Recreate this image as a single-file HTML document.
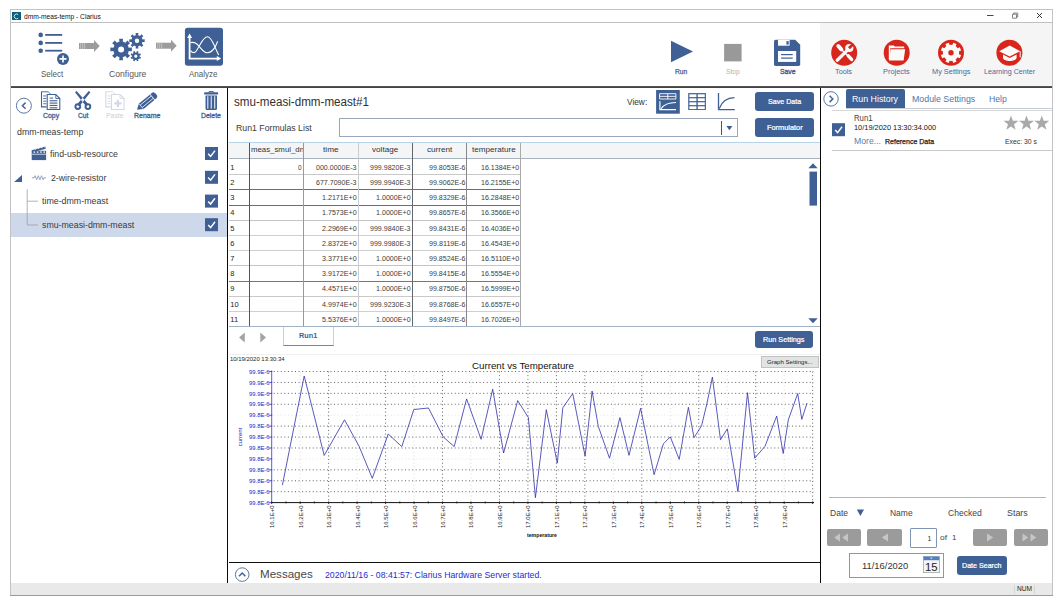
<!DOCTYPE html>
<html><head><meta charset="utf-8"><title>dmm-meas-temp - Clarius</title><style>
html,body{margin:0;padding:0;background:#fff;}
body{width:1063px;height:603px;position:relative;overflow:hidden;font-family:"Liberation Sans",sans-serif;}
div,svg,span{position:absolute;}
span{white-space:pre;transform-origin:0 50%;}
</style></head><body>
<div style="left:10px;top:9px;width:1043px;height:587px;background:#fff;box-sizing:border-box;border:1px solid #c2c2c2;"></div>
<div style="left:11px;top:22px;width:1041px;height:1px;background:#c0c0c0;"></div>
<div style="left:820.4px;top:23px;width:231.6px;height:63px;background:#f5f5f5;"></div>
<div style="left:11px;top:86px;width:1041px;height:2px;background:#4a4a4a;background:linear-gradient(#5e5e5e,#3c3c3c);"></div>
<div style="left:226.9px;top:88px;width:1.3px;height:495px;background:#0a0a0a;"></div>
<div style="left:819.8px;top:88px;width:1.3px;height:495px;background:#0a0a0a;"></div>
<div style="left:229px;top:562px;width:591px;height:1px;background:#111;"></div>
<div style="left:11px;top:583px;width:1041px;height:12px;background:#e9e9e9;"></div>
<div style="left:10px;top:595px;width:1043px;height:1px;background:#9a9a9a;"></div>
<div style="left:12px;top:11.5px;width:9px;height:8.7px;background:#0d5f7e;"></div>
<svg style="left:12px;top:11.5px;" width="9" height="9" viewBox="0 0 9 9"><path d="M6.2 2.6A2.4 2.4 0 1 0 6.2 6.2" fill="none" stroke="#cfe6ee" stroke-width="1"/></svg>
<span style="top:12.10px;height:9px;line-height:9px;font-size:7px;color:#111;left:23.80px;transform:scaleX(0.9492);">dmm-meas-temp - Clarius</span>
<svg style="left:983px;top:10px;" width="64" height="12" viewBox="0 0 64 12"><path d="M4 5.5h6.5" stroke="#333" stroke-width="0.9" fill="none"/><path d="M29.5 4.2h4v4h-4z M30.7 4.2v-1.2h4v4h-1.2" stroke="#555" stroke-width="0.7" fill="none"/><path d="M54 3l5 5M59 3l-5 5" stroke="#222" stroke-width="0.9" fill="none"/></svg>
<svg style="left:0px;top:0px;" width="240" height="88" viewBox="0 0 240 88"><circle cx="40.7" cy="34.9" r="2.3" fill="#3f6094"/><rect x="45.2" y="34.0" width="17" height="1.8" fill="#3f6094"/><circle cx="40.7" cy="42.9" r="2.3" fill="#3f6094"/><rect x="45.2" y="42.0" width="17" height="1.8" fill="#3f6094"/><circle cx="40.7" cy="50.7" r="2.3" fill="#3f6094"/><rect x="45.2" y="49.800000000000004" width="17" height="1.8" fill="#3f6094"/><circle cx="63" cy="58.9" r="6" fill="#3f6094"/><path d="M63 55.4v7M59.5 58.9h7" stroke="#fff" stroke-width="1.6"/></svg>
<span style="top:68.00px;height:12px;line-height:12px;font-size:9px;color:#585858;left:40.70px;transform:scaleX(0.8914);">Select</span>
<span style="top:68.00px;height:12px;line-height:12px;font-size:9px;color:#585858;left:109.00px;transform:scaleX(0.9582);">Configure</span>
<span style="top:68.00px;height:12px;line-height:12px;font-size:9px;color:#585858;left:189.30px;transform:scaleX(0.8929);">Analyze</span>
<svg style="left:0px;top:0px;" width="240" height="88" viewBox="0 0 240 88"><rect x="79" y="43" width="15.5" height="6" fill="#9c9c9c"/><rect x="80.3" y="43" width="0.8" height="6" fill="#c8c8c8"/><rect x="82.3" y="43" width="0.8" height="6" fill="#c8c8c8"/><rect x="84.3" y="43" width="0.8" height="6" fill="#c8c8c8"/><path d="M94 40L99.7 46L94 52Z" fill="#9c9c9c"/><rect x="156" y="42.7" width="15.5" height="6" fill="#9c9c9c"/><rect x="157.3" y="42.7" width="0.8" height="6" fill="#c8c8c8"/><rect x="159.3" y="42.7" width="0.8" height="6" fill="#c8c8c8"/><rect x="161.3" y="42.7" width="0.8" height="6" fill="#c8c8c8"/><path d="M171 39.7L176.7 45.7L171 51.7Z" fill="#9c9c9c"/></svg>
<span style="top:66.70px;height:9px;line-height:9px;font-size:7px;color:#3f6094;left:674.90px;transform:scaleX(0.9577);-webkit-text-stroke:0.25px #3f6094;">Run</span>
<span style="top:66.70px;height:9px;line-height:9px;font-size:7px;color:#b0b0b0;left:725.60px;transform:scaleX(0.9440);">Stop</span>
<span style="top:66.70px;height:9px;line-height:9px;font-size:7px;color:#3f6094;left:779.60px;transform:scaleX(0.9769);-webkit-text-stroke:0.35px #3f6094;">Save</span>
<svg style="left:660px;top:30px;" width="160" height="50" viewBox="0 0 160 50"><path d="M11 10.7L33 21.5L11 32.3Z" fill="#3f6094"/><rect x="64.1" y="13.9" width="17.5" height="17.5" fill="#999"/></svg>
<span style="top:66.50px;height:9px;line-height:9px;font-size:7px;color:#4a6a9c;left:835.00px;transform:scaleX(1.0402);">Tools</span>
<span style="top:66.50px;height:9px;line-height:9px;font-size:7px;color:#4a6a9c;left:882.70px;transform:scaleX(1.0594);">Projects</span>
<span style="top:66.50px;height:9px;line-height:9px;font-size:7px;color:#4a6a9c;left:931.70px;transform:scaleX(1.0525);">My Settings</span>
<span style="top:66.50px;height:9px;line-height:9px;font-size:7px;color:#4a6a9c;left:983.70px;transform:scaleX(1.0179);">Learning Center</span>
<svg style="left:820px;top:30px;" width="232" height="40" viewBox="0 0 232 40"><circle cx="24.200000000000045" cy="22.7" r="13" fill="#d8261c"/><circle cx="76.70000000000005" cy="22.7" r="13" fill="#d8261c"/><circle cx="131" cy="22.7" r="13" fill="#d8261c"/><circle cx="189.39999999999998" cy="22.7" r="13" fill="#d8261c"/></svg>
<span style="top:111.00px;height:9px;line-height:9px;font-size:7px;color:#3f6094;left:43.10px;transform:scaleX(0.9912);-webkit-text-stroke:0.3px #3f6094;">Copy</span>
<span style="top:111.00px;height:9px;line-height:9px;font-size:7px;color:#3f6094;left:77.90px;transform:scaleX(0.9536);-webkit-text-stroke:0.3px #3f6094;">Cut</span>
<span style="top:111.00px;height:9px;line-height:9px;font-size:7px;color:#c8cfda;left:106.30px;transform:scaleX(0.9829);">Paste</span>
<span style="top:111.00px;height:9px;line-height:9px;font-size:7px;color:#3f6094;left:133.80px;transform:scaleX(0.9936);-webkit-text-stroke:0.3px #3f6094;">Rename</span>
<span style="top:111.00px;height:9px;line-height:9px;font-size:7px;color:#3f6094;left:200.90px;transform:scaleX(0.9835);-webkit-text-stroke:0.3px #3f6094;">Delete</span>
<span style="top:126.40px;height:12px;line-height:12px;font-size:9px;color:#3a3a3a;left:16.60px;transform:scaleX(0.9748);">dmm-meas-temp</span>
<div style="left:11px;top:213px;width:216px;height:24px;background:#cdd8ea;"></div>
<span style="top:147.70px;height:12px;line-height:12px;font-size:9px;color:#3a3a3a;left:49.70px;transform:scaleX(0.9696);">find-usb-resource</span>
<span style="top:171.50px;height:12px;line-height:12px;font-size:9px;color:#3a3a3a;left:50.80px;transform:scaleX(0.9717);">2-wire-resistor</span>
<span style="top:195.30px;height:12px;line-height:12px;font-size:9px;color:#3a3a3a;left:41.50px;transform:scaleX(0.9805);">time-dmm-meast</span>
<span style="top:219.10px;height:12px;line-height:12px;font-size:9px;color:#3a3a3a;left:41.50px;transform:scaleX(0.9766);">smu-measi-dmm-meast</span>
<svg style="left:0px;top:0px;" width="230" height="250" viewBox="0 0 230 250"><rect x="205" y="147" width="13" height="13" fill="#3f6094"/><path d="M208.2 153.8L210.6 156.4L215.0 150.6" fill="none" stroke="#fff" stroke-width="1.5"/><rect x="205" y="170.8" width="13" height="13" fill="#3f6094"/><path d="M208.2 177.60000000000002L210.6 180.20000000000002L215.0 174.4" fill="none" stroke="#fff" stroke-width="1.5"/><rect x="205" y="194.6" width="13" height="13" fill="#3f6094"/><path d="M208.2 201.4L210.6 204.0L215.0 198.2" fill="none" stroke="#fff" stroke-width="1.5"/><rect x="205" y="218.2" width="13" height="13" fill="#3f6094"/><path d="M208.2 225.0L210.6 227.6L215.0 221.79999999999998" fill="none" stroke="#fff" stroke-width="1.5"/><path d="M27.2 189.2V225H38M27.2 201.2H38" fill="none" stroke="#a0a0a0" stroke-width="0.8"/><path d="M22 175V182H14.1Z" fill="#3f6094"/></svg>
<span style="top:94.20px;height:16px;line-height:16px;font-size:12.5px;color:#303030;left:234.00px;transform:scaleX(0.9299);">smu-measi-dmm-meast#1</span>
<span style="top:121.60px;height:12px;line-height:12px;font-size:9px;color:#3a3a3a;left:236.30px;transform:scaleX(0.9701);">Run1 Formulas List</span>
<span style="top:95.60px;height:12px;line-height:12px;font-size:9px;color:#333;left:627.00px;transform:scaleX(0.9241);">View:</span>
<div style="left:339.3px;top:118.2px;width:398.5px;height:19px;background:#fff;box-sizing:border-box;border:1px solid #9aa7ba;"></div>
<div style="left:721.3px;top:120.5px;width:0.8px;height:14.5px;background:#555;"></div>
<svg style="left:724px;top:124px;" width="12" height="8" viewBox="0 0 12 8"><path d="M2.4 2L8.4 2L5.4 6.2Z" fill="#3f6094"/></svg>
<div style="left:755.1px;top:92.2px;width:58.7px;height:18.6px;background:#3f6094;border-radius:3px;"></div>
<span style="top:97.20px;height:9px;line-height:9px;font-size:7px;color:#fff;left:767.85px;transform:scaleX(1.0157);-webkit-text-stroke:0.22px #fff;">Save Data</span>
<div style="left:755.1px;top:118.2px;width:58.7px;height:18.6px;background:#3f6094;border-radius:3px;"></div>
<span style="top:123.20px;height:9px;line-height:9px;font-size:7px;color:#fff;left:766.65px;transform:scaleX(1.0519);-webkit-text-stroke:0.22px #fff;">Formulator</span>
<div style="left:754.7px;top:330.8px;width:58.1px;height:17.2px;background:#3f6094;border-radius:3px;"></div>
<span style="top:335.10px;height:9px;line-height:9px;font-size:7px;color:#fff;left:763.00px;transform:scaleX(1.0351);-webkit-text-stroke:0.22px #fff;">Run Settings</span>
<div style="left:228.2px;top:142px;width:591.6px;height:16.3px;background:#f3f5f7;"></div>
<div style="left:229px;top:141.8px;width:591px;height:1px;background:#b9d3e6;"></div>
<div style="left:229px;top:158px;width:591px;height:1px;background:#a9b3bd;"></div>
<span style="top:145.40px;height:10px;line-height:10px;font-size:8px;color:#333;left:251.00px;transform:scaleX(0.9770);clip-path:inset(0 0.6px 0 0);">meas_smul_dn</span>
<span style="top:145.40px;height:10px;line-height:10px;font-size:8px;color:#333;left:323.35px;transform:scaleX(1.0314);">time</span>
<span style="top:145.40px;height:10px;line-height:10px;font-size:8px;color:#333;left:372.35px;transform:scaleX(1.0156);">voltage</span>
<span style="top:145.40px;height:10px;line-height:10px;font-size:8px;color:#333;left:426.95px;transform:scaleX(1.0198);">current</span>
<span style="top:145.40px;height:10px;line-height:10px;font-size:8px;color:#333;left:471.80px;transform:scaleX(1.0130);">temperature</span>
<div style="left:229px;top:174.0px;width:291.5px;height:1px;background:#c9c9c9;"></div>
<div style="left:229px;top:189.0px;width:291.5px;height:1px;background:#6e6e6e;"></div>
<div style="left:229px;top:204.5px;width:291.5px;height:1px;background:#6e6e6e;"></div>
<div style="left:229px;top:219.5px;width:291.5px;height:1px;background:#c4c4c4;"></div>
<div style="left:229px;top:235.0px;width:291.5px;height:1px;background:#cfcfcf;"></div>
<div style="left:229px;top:250.0px;width:291.5px;height:1px;background:#cfcfcf;"></div>
<div style="left:229px;top:265.0px;width:291.5px;height:1px;background:#c4c4c4;"></div>
<div style="left:229px;top:280.5px;width:291.5px;height:1px;background:#777;"></div>
<div style="left:229px;top:295.5px;width:291.5px;height:1px;background:#c9c9c9;"></div>
<div style="left:229px;top:310.5px;width:291.5px;height:1px;background:#cfcfcf;"></div>
<div style="left:249.1px;top:142.5px;width:1px;height:184px;background:#555;"></div>
<div style="left:303.4px;top:142.5px;width:1px;height:184px;background:#999;"></div>
<div style="left:357.9px;top:142.5px;width:1px;height:184px;background:#ccc;"></div>
<div style="left:412.0px;top:142.5px;width:1px;height:184px;background:#666;"></div>
<div style="left:466.3px;top:142.5px;width:1px;height:184px;background:#888;"></div>
<div style="left:520.0px;top:142.5px;width:1px;height:184px;background:#aaa;"></div>
<span style="top:162.79px;height:10px;line-height:10px;font-size:7.5px;color:#222;left:230.30px;">1</span>
<span style="top:162.79px;height:10px;line-height:10px;font-size:7.5px;color:#3c3c3c;left:298.10px;transform:scaleX(0.8629);">0</span>
<span style="top:162.79px;height:10px;line-height:10px;font-size:7.5px;color:#3c3c3c;left:315.80px;transform:scaleX(0.9406);">000.0000E-3</span>
<span style="top:162.79px;height:10px;line-height:10px;font-size:7.5px;color:#3c3c3c;left:370.40px;transform:scaleX(0.9406);">999.9820E-3</span>
<span style="top:162.79px;height:10px;line-height:10px;font-size:7.5px;color:#3c3c3c;left:429.10px;transform:scaleX(0.9408);">99.8053E-6</span>
<span style="top:162.79px;height:10px;line-height:10px;font-size:7.5px;color:#3c3c3c;left:481.20px;transform:scaleX(0.9417);">16.1384E+0</span>
<span style="top:177.98px;height:10px;line-height:10px;font-size:7.5px;color:#222;left:230.30px;">2</span>
<span style="top:177.98px;height:10px;line-height:10px;font-size:7.5px;color:#3c3c3c;left:315.80px;transform:scaleX(0.9406);">677.7090E-3</span>
<span style="top:177.98px;height:10px;line-height:10px;font-size:7.5px;color:#3c3c3c;left:370.40px;transform:scaleX(0.9406);">999.9940E-3</span>
<span style="top:177.98px;height:10px;line-height:10px;font-size:7.5px;color:#3c3c3c;left:429.10px;transform:scaleX(0.9408);">99.9062E-6</span>
<span style="top:177.98px;height:10px;line-height:10px;font-size:7.5px;color:#3c3c3c;left:481.20px;transform:scaleX(0.9417);">16.2155E+0</span>
<span style="top:193.17px;height:10px;line-height:10px;font-size:7.5px;color:#222;left:230.30px;">3</span>
<span style="top:193.17px;height:10px;line-height:10px;font-size:7.5px;color:#3c3c3c;left:321.60px;transform:scaleX(0.9479);">1.2171E+0</span>
<span style="top:193.17px;height:10px;line-height:10px;font-size:7.5px;color:#3c3c3c;left:376.20px;transform:scaleX(0.9479);">1.0000E+0</span>
<span style="top:193.17px;height:10px;line-height:10px;font-size:7.5px;color:#3c3c3c;left:429.10px;transform:scaleX(0.9408);">99.8329E-6</span>
<span style="top:193.17px;height:10px;line-height:10px;font-size:7.5px;color:#3c3c3c;left:481.20px;transform:scaleX(0.9417);">16.2848E+0</span>
<span style="top:208.36px;height:10px;line-height:10px;font-size:7.5px;color:#222;left:230.30px;">4</span>
<span style="top:208.36px;height:10px;line-height:10px;font-size:7.5px;color:#3c3c3c;left:321.60px;transform:scaleX(0.9479);">1.7573E+0</span>
<span style="top:208.36px;height:10px;line-height:10px;font-size:7.5px;color:#3c3c3c;left:376.20px;transform:scaleX(0.9479);">1.0000E+0</span>
<span style="top:208.36px;height:10px;line-height:10px;font-size:7.5px;color:#3c3c3c;left:429.10px;transform:scaleX(0.9408);">99.8657E-6</span>
<span style="top:208.36px;height:10px;line-height:10px;font-size:7.5px;color:#3c3c3c;left:481.20px;transform:scaleX(0.9417);">16.3566E+0</span>
<span style="top:223.55px;height:10px;line-height:10px;font-size:7.5px;color:#222;left:230.30px;">5</span>
<span style="top:223.55px;height:10px;line-height:10px;font-size:7.5px;color:#3c3c3c;left:321.60px;transform:scaleX(0.9479);">2.2969E+0</span>
<span style="top:223.55px;height:10px;line-height:10px;font-size:7.5px;color:#3c3c3c;left:370.40px;transform:scaleX(0.9406);">999.9840E-3</span>
<span style="top:223.55px;height:10px;line-height:10px;font-size:7.5px;color:#3c3c3c;left:429.10px;transform:scaleX(0.9408);">99.8431E-6</span>
<span style="top:223.55px;height:10px;line-height:10px;font-size:7.5px;color:#3c3c3c;left:481.20px;transform:scaleX(0.9417);">16.4036E+0</span>
<span style="top:238.74px;height:10px;line-height:10px;font-size:7.5px;color:#222;left:230.30px;">6</span>
<span style="top:238.74px;height:10px;line-height:10px;font-size:7.5px;color:#3c3c3c;left:321.60px;transform:scaleX(0.9479);">2.8372E+0</span>
<span style="top:238.74px;height:10px;line-height:10px;font-size:7.5px;color:#3c3c3c;left:370.40px;transform:scaleX(0.9406);">999.9980E-3</span>
<span style="top:238.74px;height:10px;line-height:10px;font-size:7.5px;color:#3c3c3c;left:429.10px;transform:scaleX(0.9546);">99.8119E-6</span>
<span style="top:238.74px;height:10px;line-height:10px;font-size:7.5px;color:#3c3c3c;left:481.20px;transform:scaleX(0.9417);">16.4543E+0</span>
<span style="top:253.94px;height:10px;line-height:10px;font-size:7.5px;color:#222;left:230.30px;">7</span>
<span style="top:253.94px;height:10px;line-height:10px;font-size:7.5px;color:#3c3c3c;left:321.60px;transform:scaleX(0.9479);">3.3771E+0</span>
<span style="top:253.94px;height:10px;line-height:10px;font-size:7.5px;color:#3c3c3c;left:376.20px;transform:scaleX(0.9479);">1.0000E+0</span>
<span style="top:253.94px;height:10px;line-height:10px;font-size:7.5px;color:#3c3c3c;left:429.10px;transform:scaleX(0.9408);">99.8524E-6</span>
<span style="top:253.94px;height:10px;line-height:10px;font-size:7.5px;color:#3c3c3c;left:481.20px;transform:scaleX(0.9549);">16.5110E+0</span>
<span style="top:269.12px;height:10px;line-height:10px;font-size:7.5px;color:#222;left:230.30px;">8</span>
<span style="top:269.12px;height:10px;line-height:10px;font-size:7.5px;color:#3c3c3c;left:321.60px;transform:scaleX(0.9479);">3.9172E+0</span>
<span style="top:269.12px;height:10px;line-height:10px;font-size:7.5px;color:#3c3c3c;left:376.20px;transform:scaleX(0.9479);">1.0000E+0</span>
<span style="top:269.12px;height:10px;line-height:10px;font-size:7.5px;color:#3c3c3c;left:429.10px;transform:scaleX(0.9408);">99.8415E-6</span>
<span style="top:269.12px;height:10px;line-height:10px;font-size:7.5px;color:#3c3c3c;left:481.20px;transform:scaleX(0.9417);">16.5554E+0</span>
<span style="top:284.31px;height:10px;line-height:10px;font-size:7.5px;color:#222;left:230.30px;">9</span>
<span style="top:284.31px;height:10px;line-height:10px;font-size:7.5px;color:#3c3c3c;left:321.60px;transform:scaleX(0.9479);">4.4571E+0</span>
<span style="top:284.31px;height:10px;line-height:10px;font-size:7.5px;color:#3c3c3c;left:376.20px;transform:scaleX(0.9479);">1.0000E+0</span>
<span style="top:284.31px;height:10px;line-height:10px;font-size:7.5px;color:#3c3c3c;left:429.10px;transform:scaleX(0.9408);">99.8750E-6</span>
<span style="top:284.31px;height:10px;line-height:10px;font-size:7.5px;color:#3c3c3c;left:481.20px;transform:scaleX(0.9417);">16.5999E+0</span>
<span style="top:299.51px;height:10px;line-height:10px;font-size:7.5px;color:#222;left:230.30px;">10</span>
<span style="top:299.51px;height:10px;line-height:10px;font-size:7.5px;color:#3c3c3c;left:321.60px;transform:scaleX(0.9479);">4.9974E+0</span>
<span style="top:299.51px;height:10px;line-height:10px;font-size:7.5px;color:#3c3c3c;left:370.40px;transform:scaleX(0.9406);">999.9230E-3</span>
<span style="top:299.51px;height:10px;line-height:10px;font-size:7.5px;color:#3c3c3c;left:429.10px;transform:scaleX(0.9408);">99.8768E-6</span>
<span style="top:299.51px;height:10px;line-height:10px;font-size:7.5px;color:#3c3c3c;left:481.20px;transform:scaleX(0.9417);">16.6557E+0</span>
<span style="top:314.69px;height:10px;line-height:10px;font-size:7.5px;color:#222;left:230.30px;">11</span>
<span style="top:314.69px;height:10px;line-height:10px;font-size:7.5px;color:#3c3c3c;left:321.60px;transform:scaleX(0.9479);">5.5376E+0</span>
<span style="top:314.69px;height:10px;line-height:10px;font-size:7.5px;color:#3c3c3c;left:376.20px;transform:scaleX(0.9479);">1.0000E+0</span>
<span style="top:314.69px;height:10px;line-height:10px;font-size:7.5px;color:#3c3c3c;left:429.10px;transform:scaleX(0.9408);">99.8497E-6</span>
<span style="top:314.69px;height:10px;line-height:10px;font-size:7.5px;color:#3c3c3c;left:481.20px;transform:scaleX(0.9417);">16.7026E+0</span>
<svg style="left:806px;top:160px;" width="14" height="168" viewBox="0 0 14 168"><path d="M2.3 8.3L11.7 8.3L7 3.2Z" fill="#3f6094"/><rect x="3.5" y="11.6" width="7.5" height="34" fill="#3f6094"/><path d="M2.3 158.2L11.7 158.2L7 163.2Z" fill="#3f6094"/></svg>
<div style="left:229px;top:326px;width:591px;height:1px;background:#9fb2c6;"></div>
<div style="left:283.4px;top:326.5px;width:50.3px;height:19.5px;background:#fff;box-sizing:border-box;border:1px solid #c8d0da;border-top:none;border-bottom:1.5px solid #6f87a8;"></div>
<span style="top:330.60px;height:10px;line-height:10px;font-size:8px;color:#3f6094;font-weight:700;left:299.20px;transform:scaleX(0.9100);">Run1</span>
<svg style="left:236px;top:330px;" width="34" height="15" viewBox="0 0 34 15"><path d="M8.8 2.5V12.5L3 7.5Z M24.3 2.5V12.5L30 7.5Z" fill="#a3a3a3"/></svg>
<div style="left:229px;top:353.5px;width:591px;height:1px;background:#f0f0f0;"></div>
<span style="top:354.80px;height:8px;line-height:8px;font-size:5.8px;color:#222;left:229.80px;transform:scaleX(1.0244);">10/19/2020 13:30:34</span>
<span style="top:359.80px;height:12px;line-height:12px;font-size:9.4px;color:#111;left:472.00px;transform:scaleX(1.0375);">Current vs Temperature</span>
<div style="left:761.4px;top:356px;width:57.2px;height:11.5px;background:#e3e3e3;box-sizing:border-box;border:1px solid #c2c2c2;"></div>
<span style="top:357.90px;height:8px;line-height:8px;font-size:6px;color:#222;left:767.45px;transform:scaleX(1.0104);">Graph Settings...</span>
<svg style="left:0px;top:0px;" width="830" height="560" viewBox="0 0 830 560"><path d="M273.7 371.50H813.5" stroke="#3a3a3a" stroke-width="0.8" stroke-dasharray="1 2.55" fill="none"/><path d="M273.7 382.43H813.5" stroke="#3a3a3a" stroke-width="0.8" stroke-dasharray="1 2.55" fill="none"/><path d="M273.7 393.35H813.5" stroke="#3a3a3a" stroke-width="0.8" stroke-dasharray="1 2.55" fill="none"/><path d="M273.7 404.27H813.5" stroke="#3a3a3a" stroke-width="0.8" stroke-dasharray="1 2.55" fill="none"/><path d="M273.7 415.20H813.5" stroke="#dcdcdc" stroke-width="0.8" stroke-dasharray="1 2.55" fill="none"/><path d="M273.7 426.12H813.5" stroke="#3a3a3a" stroke-width="0.8" stroke-dasharray="1 2.55" fill="none"/><path d="M273.7 437.05H813.5" stroke="#3a3a3a" stroke-width="0.8" stroke-dasharray="1 2.55" fill="none"/><path d="M273.7 447.98H813.5" stroke="#3a3a3a" stroke-width="0.8" stroke-dasharray="1 2.55" fill="none"/><path d="M273.7 458.90H813.5" stroke="#dcdcdc" stroke-width="0.8" stroke-dasharray="1 2.55" fill="none"/><path d="M273.7 469.83H813.5" stroke="#3a3a3a" stroke-width="0.8" stroke-dasharray="1 2.55" fill="none"/><path d="M273.7 480.75H813.5" stroke="#3a3a3a" stroke-width="0.8" stroke-dasharray="1 2.55" fill="none"/><path d="M273.7 491.68H813.5" stroke="#3a3a3a" stroke-width="0.8" stroke-dasharray="1 2.55" fill="none"/><path d="M300.17 371.5V502.6" stroke="#cfcfcf" stroke-width="0.8" stroke-dasharray="1 2.65" fill="none"/><path d="M328.64 371.5V502.6" stroke="#3a3a3a" stroke-width="0.8" stroke-dasharray="1 2.65" fill="none"/><path d="M357.11 371.5V502.6" stroke="#cfcfcf" stroke-width="0.8" stroke-dasharray="1 2.65" fill="none"/><path d="M385.58 371.5V502.6" stroke="#3a3a3a" stroke-width="0.8" stroke-dasharray="1 2.65" fill="none"/><path d="M414.05 371.5V502.6" stroke="#cfcfcf" stroke-width="0.8" stroke-dasharray="1 2.65" fill="none"/><path d="M442.52 371.5V502.6" stroke="#3a3a3a" stroke-width="0.8" stroke-dasharray="1 2.65" fill="none"/><path d="M470.99 371.5V502.6" stroke="#cfcfcf" stroke-width="0.8" stroke-dasharray="1 2.65" fill="none"/><path d="M499.46 371.5V502.6" stroke="#3a3a3a" stroke-width="0.8" stroke-dasharray="1 2.65" fill="none"/><path d="M527.93 371.5V502.6" stroke="#3a3a3a" stroke-width="0.8" stroke-dasharray="1 2.65" fill="none"/><path d="M556.40 371.5V502.6" stroke="#3a3a3a" stroke-width="0.8" stroke-dasharray="1 2.65" fill="none"/><path d="M584.87 371.5V502.6" stroke="#3a3a3a" stroke-width="0.8" stroke-dasharray="1 2.65" fill="none"/><path d="M613.34 371.5V502.6" stroke="#cfcfcf" stroke-width="0.8" stroke-dasharray="1 2.65" fill="none"/><path d="M641.81 371.5V502.6" stroke="#3a3a3a" stroke-width="0.8" stroke-dasharray="1 2.65" fill="none"/><path d="M670.28 371.5V502.6" stroke="#cfcfcf" stroke-width="0.8" stroke-dasharray="1 2.65" fill="none"/><path d="M698.75 371.5V502.6" stroke="#3a3a3a" stroke-width="0.8" stroke-dasharray="1 2.65" fill="none"/><path d="M727.22 371.5V502.6" stroke="#cfcfcf" stroke-width="0.8" stroke-dasharray="1 2.65" fill="none"/><path d="M755.69 371.5V502.6" stroke="#3a3a3a" stroke-width="0.8" stroke-dasharray="1 2.65" fill="none"/><path d="M784.16 371.5V502.6" stroke="#cfcfcf" stroke-width="0.8" stroke-dasharray="1 2.65" fill="none"/><path d="M812.63 371.5V502.6" stroke="#3a3a3a" stroke-width="0.8" stroke-dasharray="1 2.65" fill="none"/><path d="M271.7 370.5V502.6" stroke="#3030cc" stroke-width="0.8" fill="none"/><path d="M271.2 502.6H814.0" stroke="#111" stroke-width="1" fill="none"/><path d="M269.2 371.50h3" stroke="#2222cc" stroke-width="0.8"/><path d="M269.2 382.43h3" stroke="#2222cc" stroke-width="0.8"/><path d="M269.2 393.35h3" stroke="#2222cc" stroke-width="0.8"/><path d="M269.2 404.27h3" stroke="#2222cc" stroke-width="0.8"/><path d="M269.2 415.20h3" stroke="#2222cc" stroke-width="0.8"/><path d="M269.2 426.12h3" stroke="#2222cc" stroke-width="0.8"/><path d="M269.2 437.05h3" stroke="#2222cc" stroke-width="0.8"/><path d="M269.2 447.98h3" stroke="#2222cc" stroke-width="0.8"/><path d="M269.2 458.90h3" stroke="#2222cc" stroke-width="0.8"/><path d="M269.2 469.83h3" stroke="#2222cc" stroke-width="0.8"/><path d="M269.2 480.75h3" stroke="#2222cc" stroke-width="0.8"/><path d="M269.2 491.68h3" stroke="#2222cc" stroke-width="0.8"/><path d="M269.2 502.60h3" stroke="#2222cc" stroke-width="0.8"/><path d="M271.70 501.40000000000003v2.6" stroke="#111" stroke-width="0.8"/><path d="M285.94 501.40000000000003v2" stroke="#111" stroke-width="0.8"/><path d="M300.17 501.40000000000003v2.6" stroke="#111" stroke-width="0.8"/><path d="M314.40 501.40000000000003v2" stroke="#111" stroke-width="0.8"/><path d="M328.64 501.40000000000003v2.6" stroke="#111" stroke-width="0.8"/><path d="M342.88 501.40000000000003v2" stroke="#111" stroke-width="0.8"/><path d="M357.11 501.40000000000003v2.6" stroke="#111" stroke-width="0.8"/><path d="M371.34 501.40000000000003v2" stroke="#111" stroke-width="0.8"/><path d="M385.58 501.40000000000003v2.6" stroke="#111" stroke-width="0.8"/><path d="M399.81 501.40000000000003v2" stroke="#111" stroke-width="0.8"/><path d="M414.05 501.40000000000003v2.6" stroke="#111" stroke-width="0.8"/><path d="M428.28 501.40000000000003v2" stroke="#111" stroke-width="0.8"/><path d="M442.52 501.40000000000003v2.6" stroke="#111" stroke-width="0.8"/><path d="M456.75 501.40000000000003v2" stroke="#111" stroke-width="0.8"/><path d="M470.99 501.40000000000003v2.6" stroke="#111" stroke-width="0.8"/><path d="M485.22 501.40000000000003v2" stroke="#111" stroke-width="0.8"/><path d="M499.46 501.40000000000003v2.6" stroke="#111" stroke-width="0.8"/><path d="M513.69 501.40000000000003v2" stroke="#111" stroke-width="0.8"/><path d="M527.93 501.40000000000003v2.6" stroke="#111" stroke-width="0.8"/><path d="M542.16 501.40000000000003v2" stroke="#111" stroke-width="0.8"/><path d="M556.40 501.40000000000003v2.6" stroke="#111" stroke-width="0.8"/><path d="M570.63 501.40000000000003v2" stroke="#111" stroke-width="0.8"/><path d="M584.87 501.40000000000003v2.6" stroke="#111" stroke-width="0.8"/><path d="M599.11 501.40000000000003v2" stroke="#111" stroke-width="0.8"/><path d="M613.34 501.40000000000003v2.6" stroke="#111" stroke-width="0.8"/><path d="M627.58 501.40000000000003v2" stroke="#111" stroke-width="0.8"/><path d="M641.81 501.40000000000003v2.6" stroke="#111" stroke-width="0.8"/><path d="M656.04 501.40000000000003v2" stroke="#111" stroke-width="0.8"/><path d="M670.28 501.40000000000003v2.6" stroke="#111" stroke-width="0.8"/><path d="M684.51 501.40000000000003v2" stroke="#111" stroke-width="0.8"/><path d="M698.75 501.40000000000003v2.6" stroke="#111" stroke-width="0.8"/><path d="M712.98 501.40000000000003v2" stroke="#111" stroke-width="0.8"/><path d="M727.22 501.40000000000003v2.6" stroke="#111" stroke-width="0.8"/><path d="M741.45 501.40000000000003v2" stroke="#111" stroke-width="0.8"/><path d="M755.69 501.40000000000003v2.6" stroke="#111" stroke-width="0.8"/><path d="M769.92 501.40000000000003v2" stroke="#111" stroke-width="0.8"/><path d="M784.16 501.40000000000003v2.6" stroke="#111" stroke-width="0.8"/><path d="M798.39 501.40000000000003v2" stroke="#111" stroke-width="0.8"/><path d="M812.63 501.40000000000003v2.6" stroke="#111" stroke-width="0.8"/><path d="M282.4 485.1L304.2 376L324.2 455.4L344.5 419.8L359 446.1L372.3 478.3L388.2 434L401.8 446.6L413.8 409.5L428.5 408L443.2 436.9L454.2 446.6L466.6 398.9L481.1 439.3L492.7 389.2L503.6 453L517.7 400.6L528.4 417.6L535.4 497.7L546.3 409.7L557.3 463.1L562.8 407.8L572.7 393.6L585.1 456.1L592.1 391.1L598.3 426.4L609.5 458.2L619.9 417.6L629 455.4L640.6 408.3L654.1 474.7L663.4 443.8L670.3 436.8L679.2 459.4L688.4 407.3L694 437.7L701.6 425.7L707 403.2L712.4 377.1L720.5 439.8L727.3 428.8L737.9 491.6L747.5 392.7L754.7 458.2L765 446.3L776.7 416L783.2 453.5L788.3 419.9L797.7 393.5L801.8 419.4L807 403" stroke="#3030ac" stroke-width="0.8" fill="none" stroke-linejoin="miter"/></svg>
<span style="top:367.70px;height:8px;line-height:8px;font-size:6px;color:#2222cc;left:248.60px;transform:scaleX(0.9802);">99.9E-6</span>
<span style="top:378.62px;height:8px;line-height:8px;font-size:6px;color:#2222cc;left:248.60px;transform:scaleX(0.9802);">99.9E-6</span>
<span style="top:389.55px;height:8px;line-height:8px;font-size:6px;color:#2222cc;left:248.60px;transform:scaleX(0.9802);">99.9E-6</span>
<span style="top:400.47px;height:8px;line-height:8px;font-size:6px;color:#2222cc;left:248.60px;transform:scaleX(0.9802);">99.9E-6</span>
<span style="top:411.40px;height:8px;line-height:8px;font-size:6px;color:#2222cc;left:248.60px;transform:scaleX(0.9802);">99.8E-6</span>
<span style="top:422.32px;height:8px;line-height:8px;font-size:6px;color:#2222cc;left:248.60px;transform:scaleX(0.9802);">99.8E-6</span>
<span style="top:433.25px;height:8px;line-height:8px;font-size:6px;color:#2222cc;left:248.60px;transform:scaleX(0.9802);">99.8E-6</span>
<span style="top:444.18px;height:8px;line-height:8px;font-size:6px;color:#2222cc;left:248.60px;transform:scaleX(0.9802);">99.8E-6</span>
<span style="top:455.10px;height:8px;line-height:8px;font-size:6px;color:#2222cc;left:248.60px;transform:scaleX(0.9802);">99.8E-6</span>
<span style="top:466.03px;height:8px;line-height:8px;font-size:6px;color:#2222cc;left:248.60px;transform:scaleX(0.9802);">99.8E-6</span>
<span style="top:476.95px;height:8px;line-height:8px;font-size:6px;color:#2222cc;left:248.60px;transform:scaleX(0.9802);">99.8E-6</span>
<span style="top:487.88px;height:8px;line-height:8px;font-size:6px;color:#2222cc;left:248.60px;transform:scaleX(0.9802);">99.8E-6</span>
<span style="top:498.80px;height:8px;line-height:8px;font-size:6px;color:#2222cc;left:248.60px;transform:scaleX(0.9802);">99.8E-6</span>
<span style="top:-4.00px;height:8px;line-height:8px;font-size:6px;color:#2222cc;left:0.00px;left:231px;top:433px;transform:rotate(-90deg);transform-origin:50% 50%;">current</span>
<span style="top:531.20px;height:8px;line-height:8px;font-size:6px;color:#111;font-weight:700;left:526.80px;transform:scaleX(0.8649);">temperature</span>
<span style="left:261.20px;top:512.8px;width:22px;height:8px;line-height:8px;font-size:6px;color:#222;text-align:center;transform:rotate(-90deg);transform-origin:50% 50%;">16.1E+0</span>
<span style="left:289.67px;top:512.8px;width:22px;height:8px;line-height:8px;font-size:6px;color:#222;text-align:center;transform:rotate(-90deg);transform-origin:50% 50%;">16.2E+0</span>
<span style="left:318.14px;top:512.8px;width:22px;height:8px;line-height:8px;font-size:6px;color:#222;text-align:center;transform:rotate(-90deg);transform-origin:50% 50%;">16.3E+0</span>
<span style="left:346.61px;top:512.8px;width:22px;height:8px;line-height:8px;font-size:6px;color:#222;text-align:center;transform:rotate(-90deg);transform-origin:50% 50%;">16.4E+0</span>
<span style="left:375.08px;top:512.8px;width:22px;height:8px;line-height:8px;font-size:6px;color:#222;text-align:center;transform:rotate(-90deg);transform-origin:50% 50%;">16.5E+0</span>
<span style="left:403.55px;top:512.8px;width:22px;height:8px;line-height:8px;font-size:6px;color:#222;text-align:center;transform:rotate(-90deg);transform-origin:50% 50%;">16.6E+0</span>
<span style="left:432.02px;top:512.8px;width:22px;height:8px;line-height:8px;font-size:6px;color:#222;text-align:center;transform:rotate(-90deg);transform-origin:50% 50%;">16.7E+0</span>
<span style="left:460.49px;top:512.8px;width:22px;height:8px;line-height:8px;font-size:6px;color:#222;text-align:center;transform:rotate(-90deg);transform-origin:50% 50%;">16.8E+0</span>
<span style="left:488.96px;top:512.8px;width:22px;height:8px;line-height:8px;font-size:6px;color:#222;text-align:center;transform:rotate(-90deg);transform-origin:50% 50%;">16.9E+0</span>
<span style="left:517.43px;top:512.8px;width:22px;height:8px;line-height:8px;font-size:6px;color:#222;text-align:center;transform:rotate(-90deg);transform-origin:50% 50%;">17.0E+0</span>
<span style="left:545.90px;top:512.8px;width:22px;height:8px;line-height:8px;font-size:6px;color:#222;text-align:center;transform:rotate(-90deg);transform-origin:50% 50%;">17.1E+0</span>
<span style="left:574.37px;top:512.8px;width:22px;height:8px;line-height:8px;font-size:6px;color:#222;text-align:center;transform:rotate(-90deg);transform-origin:50% 50%;">17.2E+0</span>
<span style="left:602.84px;top:512.8px;width:22px;height:8px;line-height:8px;font-size:6px;color:#222;text-align:center;transform:rotate(-90deg);transform-origin:50% 50%;">17.3E+0</span>
<span style="left:631.31px;top:512.8px;width:22px;height:8px;line-height:8px;font-size:6px;color:#222;text-align:center;transform:rotate(-90deg);transform-origin:50% 50%;">17.4E+0</span>
<span style="left:659.78px;top:512.8px;width:22px;height:8px;line-height:8px;font-size:6px;color:#222;text-align:center;transform:rotate(-90deg);transform-origin:50% 50%;">17.5E+0</span>
<span style="left:688.25px;top:512.8px;width:22px;height:8px;line-height:8px;font-size:6px;color:#222;text-align:center;transform:rotate(-90deg);transform-origin:50% 50%;">17.6E+0</span>
<span style="left:716.72px;top:512.8px;width:22px;height:8px;line-height:8px;font-size:6px;color:#222;text-align:center;transform:rotate(-90deg);transform-origin:50% 50%;">17.7E+0</span>
<span style="left:745.19px;top:512.8px;width:22px;height:8px;line-height:8px;font-size:6px;color:#222;text-align:center;transform:rotate(-90deg);transform-origin:50% 50%;">17.8E+0</span>
<span style="left:773.66px;top:512.8px;width:22px;height:8px;line-height:8px;font-size:6px;color:#222;text-align:center;transform:rotate(-90deg);transform-origin:50% 50%;">17.9E+0</span>
<svg style="left:234px;top:566px;" width="18" height="18" viewBox="0 0 18 18"><circle cx="8.2" cy="8.6" r="6.8" fill="none" stroke="#5a79a6" stroke-width="1"/><path d="M5 10.2L8.2 7L11.4 10.2" fill="none" stroke="#44659a" stroke-width="1.5"/></svg>
<span style="top:567.10px;height:15px;line-height:15px;font-size:11.5px;color:#484848;left:259.90px;transform:scaleX(1.0072);">Messages</span>
<span style="top:568.90px;height:12px;line-height:12px;font-size:9px;color:#2a2ad0;left:324.60px;transform:scaleX(0.9698);">2020/11/16 - 08:41:57: Clarius Hardware Server started.</span>
<span style="top:585.40px;height:8px;line-height:8px;font-size:6.5px;color:#222;left:1016.50px;transform:scaleX(1.0127);">NUM</span>
<div style="left:1014.3px;top:585px;width:0.8px;height:9px;background:#d6d6d6;"></div>
<div style="left:1033.5px;top:585px;width:0.8px;height:9px;background:#d6d6d6;"></div>
<svg style="left:822px;top:90px;" width="20" height="20" viewBox="0 0 20 20"><circle cx="9" cy="8.9" r="7.2" fill="none" stroke="#5a79a6" stroke-width="1"/><path d="M7.6 5.7L10.8 8.9L7.6 12.1" fill="none" stroke="#44659a" stroke-width="1.5"/></svg>
<div style="left:846px;top:89.2px;width:59px;height:19px;background:#3f6094;border-radius:2px 2px 0 0;"></div>
<span style="top:92.60px;height:12px;line-height:12px;font-size:9px;color:#fff;left:852.30px;transform:scaleX(0.9784);">Run History</span>
<span style="top:92.60px;height:12px;line-height:12px;font-size:9px;color:#5474a4;left:912.30px;transform:scaleX(0.9791);">Module Settings</span>
<span style="top:92.60px;height:12px;line-height:12px;font-size:9px;color:#5474a4;left:989.00px;transform:scaleX(0.9614);">Help</span>
<div style="left:846px;top:108px;width:206px;height:1px;background:#c5ccd6;"></div>
<div style="left:832px;top:110.3px;width:220px;height:1px;background:#d8d8d8;"></div>
<div style="left:832px;top:150.2px;width:220px;height:1px;background:#c9c9c9;"></div>
<svg style="left:830px;top:120px;" width="20" height="20" viewBox="0 0 20 20"><rect x="2" y="3.2" width="13" height="13" fill="#3f6094"/><path d="M5.2 10.0L7.6 12.600000000000001L12.0 6.800000000000001" fill="none" stroke="#fff" stroke-width="1.5"/></svg>
<span style="top:111.80px;height:12px;line-height:12px;font-size:9px;color:#444;left:854.00px;transform:scaleX(0.8645);">Run1</span>
<span style="top:123.00px;height:10px;line-height:10px;font-size:7.5px;color:#111;left:854.00px;transform:scaleX(0.9854);">10/19/2020 13:30:34.000</span>
<span style="top:135.20px;height:12px;line-height:12px;font-size:9px;color:#5c7cab;left:854.00px;transform:scaleX(0.9637);">More...</span>
<span style="top:136.90px;height:9px;line-height:9px;font-size:7px;color:#1a1a1a;left:885.00px;-webkit-text-stroke:0.25px #1a1a1a;">Reference Data</span>
<span style="top:136.90px;height:9px;line-height:9px;font-size:7px;color:#333;left:1005.20px;transform:scaleX(0.9790);">Exec: 30 s</span>
<svg style="left:1000px;top:112px;" width="52" height="22" viewBox="0 0 52 22"><path d="M11.00 3.40L12.86 8.74L18.51 8.86L14.01 12.28L15.64 17.69L11.00 14.46L6.36 17.69L7.99 12.28L3.49 8.86L9.14 8.74Z" fill="#a9a9a9"/><path d="M26.50 3.40L28.36 8.74L34.01 8.86L29.51 12.28L31.14 17.69L26.50 14.46L21.86 17.69L23.49 12.28L18.99 8.86L24.64 8.74Z" fill="#a9a9a9"/><path d="M41.80 3.40L43.66 8.74L49.31 8.86L44.81 12.28L46.44 17.69L41.80 14.46L37.16 17.69L38.79 12.28L34.29 8.86L39.94 8.74Z" fill="#a9a9a9"/></svg>
<div style="left:829px;top:497px;width:217px;height:1px;background:#b5b5b5;"></div>
<span style="top:507.30px;height:12px;line-height:12px;font-size:9px;color:#444;left:830.20px;transform:scaleX(0.9466);">Date</span>
<svg style="left:855px;top:508px;" width="12" height="10" viewBox="0 0 12 10"><path d="M1.8 1.6H9L5.4 8Z" fill="#3f6094"/></svg>
<span style="top:507.30px;height:12px;line-height:12px;font-size:9px;color:#444;left:889.50px;transform:scaleX(0.9411);">Name</span>
<span style="top:507.30px;height:12px;line-height:12px;font-size:9px;color:#444;left:947.60px;transform:scaleX(0.9513);">Checked</span>
<span style="top:507.30px;height:12px;line-height:12px;font-size:9px;color:#444;left:1007.40px;transform:scaleX(0.9897);">Stars</span>
<div style="left:826.8px;top:528.8px;width:34.3px;height:17.6px;background:#9b9b9b;border-radius:2px;"></div>
<div style="left:867px;top:528.8px;width:34.7px;height:17.6px;background:#9b9b9b;border-radius:2px;"></div>
<div style="left:973.1px;top:528.8px;width:34.3px;height:17.6px;background:#9b9b9b;border-radius:2px;"></div>
<div style="left:1014.2px;top:528.8px;width:33.8px;height:17.6px;background:#9b9b9b;border-radius:2px;"></div>
<svg style="left:826px;top:528px;" width="226" height="20" viewBox="0 0 226 20"><path d="M14 5.6V13.6L8.2 9.6Z M22 5.6V13.6L16.2 9.6Z" fill="#c6c6c6"/><path d="M62 5.6V13.6L55.8 9.6Z" fill="#c6c6c6"/><path d="M161 5.6V13.6L167.2 9.6Z" fill="#c6c6c6"/><path d="M196.5 5.6V13.6L202.3 9.6Z M204.5 5.6V13.6L210.3 9.6Z" fill="#c6c6c6"/></svg>
<div style="left:909.6px;top:528.3px;width:27.2px;height:19.4px;background:#fff;box-sizing:border-box;border:1px solid #8094b8;border-radius:1px;"></div>
<span style="top:534.10px;height:9px;line-height:9px;font-size:7px;color:#333;left:927.59px;">1</span>
<span style="top:533.20px;height:10px;line-height:10px;font-size:7.5px;color:#444;left:939.70px;transform:scaleX(1.1172);">of</span>
<span style="top:533.00px;height:10px;line-height:10px;font-size:8px;color:#444;left:952.00px;">1</span>
<div style="left:849.4px;top:553.2px;width:94.4px;height:24.4px;background:#fff;box-sizing:border-box;border:1px solid #969696;"></div>
<span style="top:559.70px;height:12px;line-height:12px;font-size:9px;color:#333;left:862.20px;transform:scaleX(1.0430);">11/16/2020</span>
<div style="left:957px;top:556.2px;width:50.4px;height:18.5px;background:#3f6094;border-radius:3px;"></div>
<span style="top:561.15px;height:9px;line-height:9px;font-size:7px;color:#fff;left:962.45px;transform:scaleX(1.0149);-webkit-text-stroke:0.22px #fff;">Date Search</span>
<svg style="left:923px;top:556px;" width="17" height="17" viewBox="0 0 17 17"><rect x="0.3" y="0.3" width="16.2" height="16.4" fill="#f4f4f4" stroke="#8a8a8a" stroke-width="0.6"/><rect x="0.6" y="0.6" width="15.6" height="3.6" fill="#4f7fc4"/><rect x="7.6" y="1.6" width="1.6" height="1" fill="#fff"/></svg>
<span style="top:560.30px;height:14px;line-height:14px;font-size:10.5px;color:#222;left:925.20px;transform:scaleX(1.0781);">15</span>
<svg style="left:100px;top:24px;" width="60" height="48" viewBox="100 24 60 48"><path d="M127.97 47.75L131.84 47.53L131.84 51.27L127.97 51.05ZM127.12 53.09L130.02 55.67L127.37 58.32L124.79 55.42ZM122.75 56.27L122.97 60.14L119.23 60.14L119.45 56.27ZM117.41 55.42L114.83 58.32L112.18 55.67L115.08 53.09ZM114.23 51.05L110.36 51.27L110.36 47.53L114.23 47.75ZM115.08 45.71L112.18 43.13L114.83 40.48L117.41 43.38ZM119.45 42.53L119.23 38.66L122.97 38.66L122.75 42.53ZM124.79 43.38L127.37 40.48L130.02 43.13L127.12 45.71Z" fill="#3f6094"/><circle cx="121.1" cy="49.4" r="5.42" fill="none" stroke="#3f6094" stroke-width="4.85"/><path d="M141.91 39.52L144.68 39.36L144.68 42.04L141.91 41.88ZM141.31 43.34L143.38 45.19L141.49 47.08L139.64 45.01ZM138.18 45.61L138.34 48.38L135.66 48.38L135.82 45.61ZM134.36 45.01L132.51 47.08L130.62 45.19L132.69 43.34ZM132.09 41.88L129.32 42.04L129.32 39.36L132.09 39.52ZM132.69 38.06L130.62 36.21L132.51 34.32L134.36 36.39ZM135.82 35.79L135.66 33.02L138.34 33.02L138.18 35.79ZM139.64 36.39L141.49 34.32L143.38 36.21L141.31 38.06Z" fill="#3f6094"/><circle cx="137.0" cy="40.7" r="3.91" fill="none" stroke="#3f6094" stroke-width="3.42"/><path d="M139.19 56.74L140.97 57.36L140.27 59.04L138.58 58.22ZM137.82 58.98L138.64 60.67L136.96 61.37L136.34 59.59ZM135.26 59.59L134.64 61.37L132.96 60.67L133.78 58.98ZM133.02 58.22L131.33 59.04L130.63 57.36L132.41 56.74ZM132.41 55.66L130.63 55.04L131.33 53.36L133.02 54.18ZM133.78 53.42L132.96 51.73L134.64 51.03L135.26 52.81ZM136.34 52.81L136.96 51.03L138.64 51.73L137.82 53.42ZM138.58 54.18L140.27 53.36L140.97 55.04L139.19 55.66Z" fill="#3f6094"/><circle cx="135.8" cy="56.2" r="2.71" fill="none" stroke="#3f6094" stroke-width="2.22"/></svg>
<svg style="left:180px;top:24px;" width="50" height="48" viewBox="180 24 50 48"><rect x="184.9" y="27.8" width="38.1" height="38" rx="2.8" fill="#3f6094"/><path d="M189.6 36.5V58.6H218.5" fill="none" stroke="#fff" stroke-width="1.8"/><path d="M189.6 33.6L192.1 38L187.1 38Z M221.2 58.6L216.8 56.1L216.8 61.1Z" fill="#fff"/><path d="M190.6 42.6C195 41.6 196.5 43.5 199.1 46.3C202.5 50 204 52.8 207.2 52.8C210.6 52.8 213 50.5 215 47.1C216.3 45 217 43 217.6 41.3" fill="none" stroke="#fff" stroke-width="1.1"/><path d="M190.6 50.6C192 53 194.5 53.4 196.3 51C197.5 49.4 198 48 199.1 46.3C201.5 42.3 204 36.8 207.4 36.8C210.8 36.8 213 42.5 215 47.1C216.5 50.5 217.6 52.5 218.7 55" fill="none" stroke="#fff" stroke-width="1.1"/></svg>
<svg style="left:770px;top:36px;" width="34" height="32" viewBox="770 36 34 32"><path d="M775.6 39.8H795.2L800.2 44.8V64.3A1.6 1.6 0 0 1 798.6 65.9H775.6A1.6 1.6 0 0 1 774 64.3V41.4A1.6 1.6 0 0 1 775.6 39.8Z" fill="#3f6094"/><rect x="778" y="39.8" width="11.6" height="5.9" fill="#fff"/><rect x="786.4" y="41.1" width="2.3" height="3.5" fill="#3f6094"/><rect x="778" y="51" width="18.2" height="10.9" fill="#fff"/><rect x="781.1" y="54" width="11.6" height="1.2" fill="#3f6094"/><rect x="781.1" y="57.5" width="11.6" height="1.2" fill="#3f6094"/></svg>
<svg style="left:830px;top:38px;" width="30" height="30" viewBox="830 38 30 30"><path d="M837.2 60.2L847.2 50.4" stroke="#fafafa" stroke-width="3.3" stroke-linecap="round" fill="none"/><circle cx="849.3" cy="48" r="4.1" fill="#fafafa"/><rect x="847.9" y="43.2" width="2.8" height="5.2" transform="rotate(45 849.3 48)" fill="#d8261c"/><path d="M838.3 46L841.3 49.3" stroke="#fafafa" stroke-width="4" stroke-linecap="round" fill="none"/><path d="M841 49L848 56" stroke="#fafafa" stroke-width="1.4" fill="none"/><path d="M848.3 55.8L851.6 59.4" stroke="#fafafa" stroke-width="3.4" stroke-linecap="round" fill="none"/></svg>
<svg style="left:884px;top:40px;" width="26" height="26" viewBox="884 40 26 26"><path d="M888.8 45.4H893.8L894.8 46.6H904.2V48.2H890.2V59.8H888.8Z" fill="#fafafa"/><path d="M890.6 49.2H905.2L903.6 60.4H889.2Z" fill="#fafafa"/></svg>
<svg style="left:938px;top:40px;" width="26" height="26" viewBox="938 40 26 26"><path d="M958.21 53.94L961.15 55.07L959.78 58.37L956.91 57.09ZM955.29 58.71L956.57 61.58L953.27 62.95L952.14 60.01ZM949.86 60.01L948.73 62.95L945.43 61.58L946.71 58.71ZM945.09 57.09L942.22 58.37L940.85 55.07L943.79 53.94ZM943.79 51.66L940.85 50.53L942.22 47.23L945.09 48.51ZM946.71 46.89L945.43 44.02L948.73 42.65L949.86 45.59ZM952.14 45.59L953.27 42.65L956.57 44.02L955.29 46.89ZM956.91 48.51L959.78 47.23L961.15 50.53L958.21 51.66Z" fill="#fafafa"/><circle cx="951" cy="52.8" r="4.11" fill="none" stroke="#fafafa" stroke-width="8.01"/><circle cx="951" cy="52.8" r="7.2" fill="#fafafa"/><circle cx="951" cy="52.8" r="2.7" fill="#d8261c"/></svg>
<svg style="left:996px;top:40px;" width="28" height="26" viewBox="996 40 28 26"><path d="M999.2 51.2L1009.7 45.4L1020.2 51.2L1009.7 56.6Z" fill="#fafafa"/><path d="M1003 54.4L1009.7 57.9L1016.6 54.4V57.8C1016.6 59.8 1013 61 1009.7 61C1006.4 61 1003 59.8 1003 57.8Z" fill="#fafafa"/><path d="M1020.2 51.2V57.4" stroke="#fafafa" stroke-width="1" fill="none"/></svg>
<svg style="left:14px;top:96px;" width="20" height="20" viewBox="0 0 20 20"><circle cx="9.9" cy="9.7" r="7.5" fill="none" stroke="#5a79a6" stroke-width="1"/><path d="M11.6 6.6L8.4 9.7L11.6 12.8" fill="none" stroke="#44659a" stroke-width="1.5"/></svg>
<svg style="left:38px;top:88px;" width="100" height="26" viewBox="38 88 100 26"><path d="M41.5 91.8H48.2L51.2 94.7V94.8" fill="none" stroke="#3f6094" stroke-width="0.9"/><path d="M41.5 91.5V106.89999999999999H46.6" fill="none" stroke="#3f6094" stroke-width="1.1"/><rect x="43.2" y="95.5" width="3" height="0.9" fill="#3f6094"/><rect x="43.2" y="98.1" width="3" height="0.9" fill="#3f6094"/><rect x="43.2" y="100.7" width="3" height="0.9" fill="#3f6094"/><rect x="43.2" y="103.3" width="3" height="0.9" fill="#3f6094"/><path d="M47.2 94.5H55.800000000000004L59.800000000000004 98.5V109.5H47.2Z" fill="#fff" stroke="#3f6094" stroke-width="1.1" stroke-linejoin="miter"/><path d="M55.800000000000004 94.5V98.5H59.800000000000004" fill="none" stroke="#3f6094" stroke-width="0.9"/><rect x="49.6" y="97.6" width="3.6" height="1" fill="#3f6094"/><rect x="49.6" y="100.2" width="7.8" height="1.1" fill="#3f6094"/><rect x="49.6" y="102.55" width="7.8" height="1.1" fill="#3f6094"/><rect x="49.6" y="104.9" width="7.8" height="1.1" fill="#3f6094"/><rect x="49.6" y="107.25" width="7.8" height="1.1" fill="#3f6094"/><path d="M105.8 91.8H112.5L115.5 94.7V94.8" fill="none" stroke="#d3d9e3" stroke-width="0.9"/><path d="M105.8 91.5V106.89999999999999H110.89999999999999" fill="none" stroke="#d3d9e3" stroke-width="1.1"/><rect x="107.5" y="95.5" width="3" height="0.9" fill="#d3d9e3"/><rect x="107.5" y="98.1" width="3" height="0.9" fill="#d3d9e3"/><rect x="107.5" y="100.7" width="3" height="0.9" fill="#d3d9e3"/><rect x="107.5" y="103.3" width="3" height="0.9" fill="#d3d9e3"/><path d="M111.5 94.5H120.1L124.1 98.5V109.5H111.5Z" fill="#fff" stroke="#d3d9e3" stroke-width="1.1" stroke-linejoin="miter"/><path d="M120.1 94.5V98.5H124.1" fill="none" stroke="#d3d9e3" stroke-width="0.9"/><path d="M117.9 99.7V106.9M114.3 103.3H121.5" stroke="#d3d9e3" stroke-width="2.2" fill="none"/></svg>
<svg style="left:72px;top:88px;" width="24" height="24" viewBox="72 88 24 24"><path d="M75 92.2L76.6 91L88.6 104.6L86 106.2Z M90.4 92.2L88.8 91L76.8 104.6L79.4 106.2Z" fill="#3f6094"/><circle cx="77.8" cy="106.6" r="2.4" fill="none" stroke="#3f6094" stroke-width="1.9"/><circle cx="87.9" cy="106.6" r="2.4" fill="none" stroke="#3f6094" stroke-width="1.9"/><circle cx="82.7" cy="100.3" r="0.6" fill="#dfe5ee"/></svg>
<svg style="left:132px;top:88px;" width="30" height="26" viewBox="132 88 30 26"><g transform="translate(137 109.8) rotate(-39.6)"><path d="M0 0L5.2 -3.4V3.4Z" fill="#3f6094"/><rect x="5.2" y="-3.5" width="14.6" height="7" fill="#3f6094"/><path d="M5.6 -1.55H19.4M5.6 1.55H19.4" stroke="#fff" stroke-width="0.75" fill="none"/><path d="M5.45 -3V3" stroke="#fff" stroke-width="0.6" fill="none"/><path d="M19.9 -3.5V3.5" stroke="#fff" stroke-width="0.7" fill="none"/><path d="M20.3 -3.5H22.4A2.3 3.5 0 0 1 22.4 3.5H20.3Z" fill="#3f6094"/></g></svg>
<svg style="left:200px;top:88px;" width="24" height="26" viewBox="200 88 24 26"><rect x="204.2" y="92.3" width="13.9" height="2.2" rx="0.6" fill="#3f6094"/><path d="M209 92.4V91.6H213.3V92.4" fill="none" stroke="#3f6094" stroke-width="1"/><path d="M205.5 95.5H217V108.4A1.5 1.5 0 0 1 215.5 109.9H207A1.5 1.5 0 0 1 205.5 108.4Z" fill="#3f6094"/><rect x="207.25" y="96.2" width="1.1" height="12.4" fill="#e9edf3"/><rect x="210.7" y="96.2" width="1.1" height="12.4" fill="#e9edf3"/><rect x="214.14999999999998" y="96.2" width="1.1" height="12.4" fill="#e9edf3"/></svg>
<svg style="left:28px;top:144px;" width="22" height="20" viewBox="28 144 22 20"><rect x="31.7" y="150.8" width="14.4" height="9.3" fill="#3f6094"/><rect x="31.7" y="153.8" width="14.4" height="0.8" fill="#e8ecf3"/><path d="M31.6 150.2L45.2 146.6L45.8 148.8L32.2 152.4Z" fill="#3f6094"/><rect x="33.6" y="151.3" width="1.5" height="1.6" fill="#dfe5ee"/><rect x="34.6" y="148.6" width="1.4" height="1.3" fill="#dfe5ee" transform="rotate(-15 34.6 148.6)"/><rect x="36.9" y="151.3" width="1.5" height="1.6" fill="#dfe5ee"/><rect x="37.7" y="147.79999999999998" width="1.4" height="1.3" fill="#dfe5ee" transform="rotate(-15 37.7 147.79999999999998)"/><rect x="40.2" y="151.3" width="1.5" height="1.6" fill="#dfe5ee"/><rect x="40.800000000000004" y="147.0" width="1.4" height="1.3" fill="#dfe5ee" transform="rotate(-15 40.800000000000004 147.0)"/><rect x="43.5" y="151.3" width="1.5" height="1.6" fill="#dfe5ee"/><rect x="43.900000000000006" y="146.2" width="1.4" height="1.3" fill="#dfe5ee" transform="rotate(-15 43.900000000000006 146.2)"/></svg>
<svg style="left:30px;top:172px;" width="18" height="12" viewBox="30 172 18 12"><path d="M32 177.8H34.2L35.1 175.7L36.7 179.7L38.3 175.7L39.9 179.7L41.5 175.7L43.1 179.7L43.9 177.8H45.9" fill="none" stroke="#8196b8" stroke-width="0.85"/></svg>
<svg style="left:650px;top:88px;" width="90" height="28" viewBox="650 88 90 28"><rect x="656.1" y="90" width="23.7" height="23.7" fill="#3f6094"/><path d="M659.6 93.7H675.9V99H659.6ZM659.6 96.35H675.9M667.75 93.7V99" fill="none" stroke="#fff" stroke-width="0.9"/><path d="M659.9 101.2V109.6H676" fill="none" stroke="#fff" stroke-width="1.2"/><path d="M661 108.8C663.5 104.8 668 102.6 676 102.5" fill="none" stroke="#fff" stroke-width="1.1"/><rect x="688.2" y="93.1" width="17.7" height="16.9" fill="#3f6094"/><rect x="689.4" y="94.3" width="7" height="2.8" fill="#fff"/><rect x="697.75" y="94.3" width="7" height="2.8" fill="#fff"/><rect x="689.4" y="98.3" width="7" height="2.8" fill="#fff"/><rect x="697.75" y="98.3" width="7" height="2.8" fill="#fff"/><rect x="689.4" y="102.3" width="7" height="2.8" fill="#fff"/><rect x="697.75" y="102.3" width="7" height="2.8" fill="#fff"/><rect x="689.4" y="106.3" width="7" height="2.8" fill="#fff"/><rect x="697.75" y="106.3" width="7" height="2.8" fill="#fff"/><path d="M718.5 93.1V109.7H734.8" fill="none" stroke="#3f6094" stroke-width="1.3"/><path d="M719.3 108.4C721.5 102.5 726 98 734.5 97.7" fill="none" stroke="#3f6094" stroke-width="1.3"/></svg>
</body></html>
